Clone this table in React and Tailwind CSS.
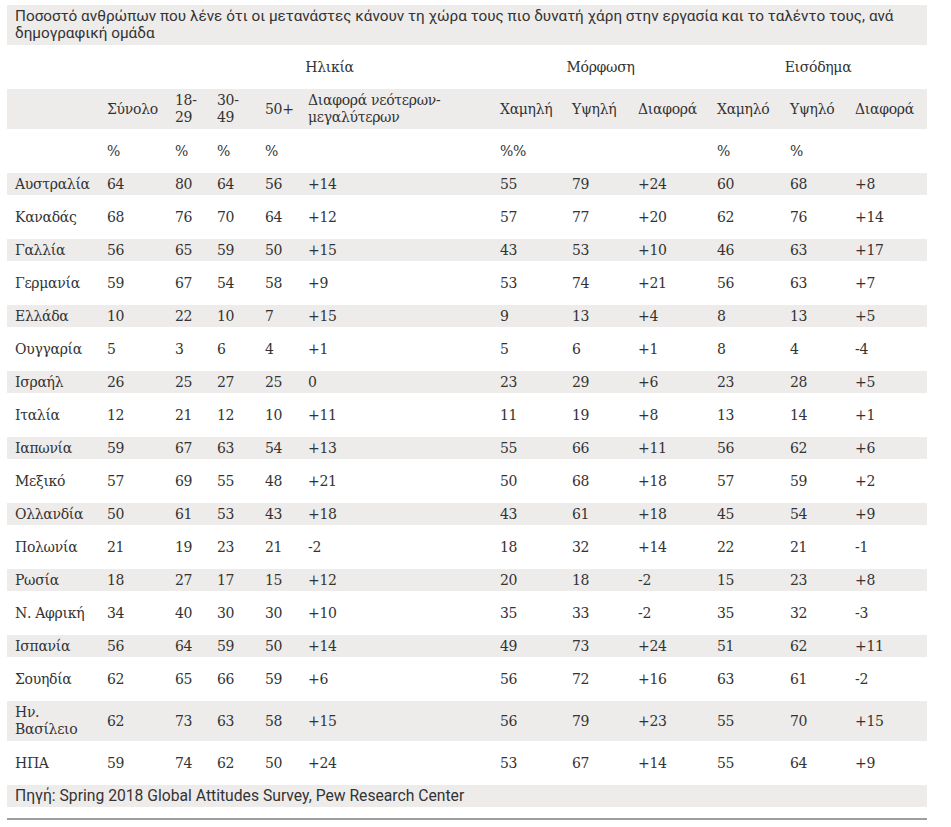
const rows = [
  ["Αυστραλία", "64", "80", "64", "56", "+14", "55", "79", "+24", "60", "68", "+8"],
  ["Καναδάς", "68", "76", "70", "64", "+12", "57", "77", "+20", "62", "76", "+14"],
  ["Γαλλία", "56", "65", "59", "50", "+15", "43", "53", "+10", "46", "63", "+17"],
  ["Γερμανία", "59", "67", "54", "58", "+9", "53", "74", "+21", "56", "63", "+7"],
  ["Ελλάδα", "10", "22", "10", "7", "+15", "9", "13", "+4", "8", "13", "+5"],
  ["Ουγγαρία", "5", "3", "6", "4", "+1", "5", "6", "+1", "8", "4", "-4"],
  ["Ισραήλ", "26", "25", "27", "25", "0", "23", "29", "+6", "23", "28", "+5"],
  ["Ιταλία", "12", "21", "12", "10", "+11", "11", "19", "+8", "13", "14", "+1"],
  ["Ιαπωνία", "59", "67", "63", "54", "+13", "55", "66", "+11", "56", "62", "+6"],
  ["Μεξικό", "57", "69", "55", "48", "+21", "50", "68", "+18", "57", "59", "+2"],
  ["Ολλανδία", "50", "61", "53", "43", "+18", "43", "61", "+18", "45", "54", "+9"],
  ["Πολωνία", "21", "19", "23", "21", "-2", "18", "32", "+14", "22", "21", "-1"],
  ["Ρωσία", "18", "27", "17", "15", "+12", "20", "18", "-2", "15", "23", "+8"],
  ["Ν. Αφρική", "34", "40", "30", "30", "+10", "35", "33", "-2", "35", "32", "-3"],
  ["Ισπανία", "56", "64", "59", "50", "+14", "49", "73", "+24", "51", "62", "+11"],
  ["Σουηδία", "62", "65", "66", "59", "+6", "56", "72", "+16", "63", "61", "-2"],
  [["Ην.", "Βασίλειο"], "62", "73", "63", "58", "+15", "56", "79", "+23", "55", "70", "+15"],
  ["ΗΠΑ", "59", "74", "62", "50", "+24", "53", "67", "+14", "55", "64", "+9"],
];

const cols =
  "grid grid-cols-[92px_68px_42px_48px_43px_192px_72px_66px_79px_73px_65px_80px] items-center";

function Cell({ children }) {
  return <div className="px-2 leading-[17px] whitespace-nowrap">{children}</div>;
}

export default function App() {
  return (
    <div className="min-h-screen bg-white text-[#333] pt-[5px] pl-[7px]">
      <div className="w-[920px] flex flex-col gap-[11px] font-['DejaVu_Serif',serif] text-[14px] tracking-[-0.3px]">
        <div className="bg-[#eeeceb] h-[40px] px-2 pt-[3px] font-['Roboto',sans-serif] text-[15.3px] leading-[17px] tracking-normal text-[#333]">
          Ποσοστό ανθρώπων που λένε ότι οι μετανάστες κάνουν τη χώρα τους πιο δυνατή χάρη στην εργασία και το ταλέντο τους, ανά
          δημογραφική ομάδα
        </div>

        <div className="grid grid-cols-[92px_68px_325px_217px_218px] h-[22px] items-center">
          <div />
          <div />
          <div className="text-center">Ηλικία</div>
          <div className="text-center">Μόρφωση</div>
          <div className="text-center">Εισόδημα</div>
        </div>

        <div className={`${cols} h-[40px] bg-[#eeeceb]`}>
          <Cell />
          <Cell>Σύνολο</Cell>
          <Cell>18-<br />29</Cell>
          <Cell>30-<br />49</Cell>
          <Cell>50+</Cell>
          <Cell>Διαφορά νεότερων-<br />μεγαλύτερων</Cell>
          <Cell>Χαμηλή</Cell>
          <Cell>Υψηλή</Cell>
          <Cell>Διαφορά</Cell>
          <Cell>Χαμηλό</Cell>
          <Cell>Υψηλό</Cell>
          <Cell>Διαφορά</Cell>
        </div>

        <div className={`${cols} h-[22px]`}>
          <Cell />
          <Cell>%</Cell>
          <Cell>%</Cell>
          <Cell>%</Cell>
          <Cell>%</Cell>
          <Cell />
          <Cell>%%</Cell>
          <Cell />
          <Cell />
          <Cell>%</Cell>
          <Cell>%</Cell>
          <Cell />
        </div>

        {rows.map((r, i) => {
          const tall = Array.isArray(r[0]);
          return (
            <div
              key={i}
              className={`${cols} ${tall ? "h-[40px]" : "h-[22px]"} ${i % 2 === 0 ? "bg-[#eeeceb]" : ""}`}
            >
              {r.map((v, j) => (
                <Cell key={j}>
                  {Array.isArray(v) ? (
                    <>
                      {v[0]}
                      <br />
                      {v[1]}
                    </>
                  ) : (
                    v
                  )}
                </Cell>
              ))}
            </div>
          );
        })}

        <div className="bg-[#eeeceb] h-[22px] px-2 flex items-center font-['Roboto',sans-serif] text-[15.7px] tracking-normal">
          Πηγή: Spring 2018 Global Attitudes Survey, Pew Research Center
        </div>

        <div className="h-[2px] bg-[#9e9e9e]" />
      </div>
    </div>
  );
}
